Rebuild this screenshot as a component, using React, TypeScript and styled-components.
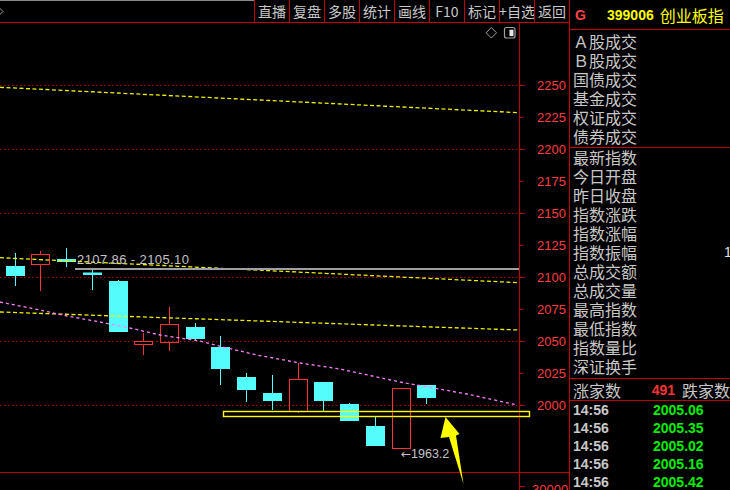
import React from "react";
import styled, { createGlobalStyle } from "styled-components";

const RED_LINE = "#c00000";
const AXIS_RED = "#ff3c3c";
const CYAN = "#54fcfc";
const CANDLE_RED = "#ff3232";
const GRID_DOT = "#b00000";

const GlobalStyle = createGlobalStyle`
  html, body { margin: 0; padding: 0; background: #000; }
  body {
    width: 730px;
    height: 490px;
    overflow: hidden;
    font-family: "Liberation Sans", "Noto Sans CJK SC", sans-serif;
  }
`;

const Screen = styled.div`
  display: flex;
  width: 730px;
  height: 490px;
  background: #000;
  overflow: hidden;
`;

const ChartColumn = styled.div`
  flex: none;
  width: 569px;
  display: flex;
  flex-direction: column;
`;

const Toolbar = styled.div`
  flex: none;
  display: flex;
  height: 22px;
  border-bottom: 1px solid ${RED_LINE};
`;

const ToolbarLead = styled.div`
  flex: 1;
  display: flex;
  align-items: center;
  box-sizing: border-box;
  border-top: 1px solid #8a8a8a;
`;

const ToolButton = styled.div`
  width: 34px;
  border-left: 1px solid ${RED_LINE};
  display: flex;
  align-items: center;
  justify-content: center;
  color: #c8c8c8;
  font: 14px/1 "Noto Sans CJK SC", sans-serif;
  white-space: nowrap;
`;

const ChartSvg = styled.svg`
  display: block;
  flex: none;
`;

const SidePanel = styled.div`
  flex: none;
  width: 160px;
  border-left: 1px solid ${RED_LINE};
  display: flex;
  flex-direction: column;
  color: #c8c8c8;
  font: 16px "Noto Sans CJK SC", sans-serif;
  overflow: hidden;
`;

const PanelHeader = styled.div`
  flex: none;
  height: 29px;
  border-bottom: 1px solid ${RED_LINE};
  display: flex;
  align-items: center;
  padding-left: 5px;
  white-space: nowrap;
`;

const MarketTag = styled.span`
  color: #ff4040;
  font: bold 14px "Liberation Sans", sans-serif;
  width: 32px;
`;

const IndexCode = styled.span`
  color: #ffff00;
  font: bold 14px "Liberation Sans", sans-serif;
  margin-right: 6px;
`;

const IndexName = styled.span`
  color: #ffff00;
  font: 16px "Noto Sans CJK SC", sans-serif;
`;

const Section = styled.div<{ $top: number; $bottom: number }>`
  flex: none;
  padding: ${(p) => p.$top}px 0 ${(p) => p.$bottom}px 3px;
  border-bottom: 1px solid ${RED_LINE};
`;

const FieldRow = styled.div`
  display: grid;
  grid-template-columns: 151px auto;
  height: 19px;
  line-height: 19px;
  white-space: nowrap;
`;

const FieldLabel = styled.span`
  display: block;
  height: 19px;
  line-height: 19px;
`;

const FieldValue = styled.span`
  display: block;
  color: #e0e0e0;
  font: 14px "Liberation Sans", sans-serif;
  line-height: 19px;
`;

const CountRow = styled.div`
  display: flex;
  align-items: center;
  height: 21px;
  padding-left: 3px;
  border-bottom: 1px solid ${RED_LINE};
  white-space: nowrap;
`;

const CountLabel = styled.span`
  width: 91px;
`;

const CountValue = styled.span`
  color: #ff3232;
  font: bold 14px "Liberation Sans", sans-serif;
  margin-right: 7px;
`;

const TickList = styled.div`
  display: flex;
  flex-direction: column;
  padding-left: 3px;
`;

const TickRow = styled.div`
  display: grid;
  grid-template-columns: 80px auto;
  height: 18px;
  align-items: center;
  font: bold 14px "Liberation Sans", sans-serif;
`;

const TickTime = styled.span`
  color: #c8c8c8;
`;

const TickPrice = styled.span`
  color: #00ee00;
`;

const toolButtons = ["直播", "复盘", "多股", "统计", "画线", "F10", "标记", "+自选", "返回"];

const volumeFields = ["Ａ股成交", "Ｂ股成交", "国债成交", "基金成交", "权证成交", "债券成交"];
const indexFields: [string, string][] = [
  ["最新指数", ""],
  ["今日开盘", ""],
  ["昨日收盘", ""],
  ["指数涨跌", ""],
  ["指数涨幅", ""],
  ["指数振幅", "1.36%"],
  ["总成交额", ""],
  ["总成交量", ""],
  ["最高指数", ""],
  ["最低指数", ""],
  ["指数量比", ""],
  ["深证换手", ""],
];
const ticks = ["2005.06", "2005.35", "2005.02", "2005.16", "2005.42"];

// price axis: y = 405.3 - (p - 2000) * 1.28
const priceY = (p: number) => 405.3 - (p - 2000) * 1.28;
const axisLevels = [2000, 2025, 2050, 2075, 2100, 2125, 2150, 2175, 2200, 2225, 2250];

// [left x, body top, body bottom, wick top, wick bottom, rising]
const candles: [number, number, number, number, number, boolean][] = [
  [6, 266, 276, 253, 286, false],
  [31, 254, 265, 251, 291, true],
  [57, 259, 262, 248, 267, false],
  [83, 272.5, 275, 269, 290, false],
  [109, 281, 332, 280, 332, false],
  [134, 341, 345, 333, 355, true],
  [160, 324, 343, 307, 351, true],
  [186, 327, 339, 323, 341, false],
  [211, 347, 369, 336, 385, false],
  [237, 377, 390, 373, 402, false],
  [263, 393, 401, 375, 410, false],
  [289, 379, 412, 363, 413, true],
  [314, 382, 401, 382, 411, false],
  [340, 404, 421, 403, 421, false],
  [366, 426, 446, 417, 446, false],
  [392, 388, 449, 388, 449, true],
  [417, 385, 398, 385, 404, false],
];

const pinkMa = "0,302 40,310 67,316 100,322 130,328 160,335 200,341 223,347 257,355 300,363 340,369 400,382 467,394 517,405";

function Candle({ c }: { c: [number, number, number, number, number, boolean] }) {
  const [x, top, bottom, wTop, wBottom, rising] = c;
  const cx = x + 9.5;
  if (rising) {
    return (
      <g stroke={CANDLE_RED} strokeWidth={1} fill="none">
        {wTop < top && <line x1={cx} y1={wTop} x2={cx} y2={top} />}
        {wBottom > bottom && <line x1={cx} y1={bottom} x2={cx} y2={wBottom} />}
        <rect x={x + 0.5} y={top + 0.5} width={18} height={Math.max(bottom - top - 1, 1)} />
      </g>
    );
  }
  return (
    <g>
      <line x1={cx} y1={wTop} x2={cx} y2={wBottom} stroke={CYAN} strokeWidth={1} />
      <rect x={x} y={top} width={19} height={Math.max(bottom - top, 2)} fill={CYAN} />
    </g>
  );
}

function PriceChart() {
  return (
    <ChartSvg width={569} height={467} viewBox="0 23 569 467">
      {/* dotted grid */}
      {[2000, 2050, 2100, 2150, 2200, 2250].map((p) => (
        <line
          key={p}
          x1={0}
          x2={517}
          y1={Math.round(priceY(p)) + 0.5}
          y2={Math.round(priceY(p)) + 0.5}
          stroke={GRID_DOT}
          strokeWidth={1}
          strokeDasharray="1.5 2.5"
        />
      ))}

      {/* axis */}
      <line x1={519.5} y1={23} x2={519.5} y2={490} stroke={RED_LINE} strokeWidth={1} />
      {axisLevels.map((p) => {
        const y = Math.round(priceY(p)) + 0.5;
        const major = p % 50 === 0;
        return (
          <g key={p}>
            <line x1={519} x2={major ? 525 : 523} y1={y} y2={y} stroke={RED_LINE} strokeWidth={1} />
            <text
              x={537}
              y={y}
              dominantBaseline="central"
              fill={AXIS_RED}
              fontFamily="Liberation Sans, sans-serif"
              fontSize={13}
            >
              {p}
            </text>
          </g>
        );
      })}
      <line x1={0} y1={472.5} x2={569} y2={472.5} stroke={RED_LINE} strokeWidth={1} />
      <line x1={519} x2={525} y1={486.5} y2={486.5} stroke={RED_LINE} strokeWidth={1} />
      <text x={532} y={489} dominantBaseline="central" fill={AXIS_RED} fontFamily="Liberation Sans, sans-serif" fontSize={13}>
        30000
      </text>

      {/* top-right chart controls */}
      <path d="M491.3 27.5 L496.5 32.8 L491.3 38 L486.1 32.8 Z" fill="none" stroke="#a0a0a0" strokeWidth={1} />
      <rect x={504.5} y={27.5} width={10.5} height={10.5} rx={2} fill="none" stroke="#a0a0a0" strokeWidth={1.2} />
      <rect x={509.5} y={29.7} width={4} height={6.4} fill="#e8e8e8" />

      {/* candles */}
      {candles.map((c, i) => (
        <Candle key={i} c={c} />
      ))}

      {/* moving averages */}
      <line x1={0} y1={87.3} x2={519} y2={112.7} stroke="#f0f000" strokeWidth={1.3} strokeDasharray="4 2.5" />
      <line x1={0} y1={257.7} x2={519} y2={282.7} stroke="#f0f000" strokeWidth={1.3} strokeDasharray="4 2.5" />
      <line x1={0} y1={312} x2={519} y2={330} stroke="#f0f000" strokeWidth={1.3} strokeDasharray="4 2.5" />
      <polyline points={pinkMa} fill="none" stroke="#ff80ff" strokeWidth={1.3} strokeDasharray="3 3" />

      {/* range line */}
      <line x1={75} y1={269} x2={519} y2={269} stroke="#a0a0a0" strokeWidth={2} />
      <text
        x={77}
        y={259.5}
        dominantBaseline="central"
        fill="#c4c4c4"
        fontFamily="Liberation Sans, sans-serif"
        fontSize={13}
        letterSpacing={0.4}
      >
        2107.86 - 2105.10
      </text>

      {/* low marker */}
      <text x={401} y={454} dominantBaseline="central" fill="#c4c4c4" fontFamily="Liberation Sans, sans-serif" fontSize={12.5}>
        <tspan fontFamily="DejaVu Sans, sans-serif" fontSize={12}>←</tspan>1963.2
      </text>

      {/* support box + arrow */}
      <rect x={223.5} y={411.5} width={306} height={5} fill="none" stroke="#ffff00" strokeWidth={1.4} />
      <polygon
        points="445.5,417 459.5,434 456,435.5 463.5,484 449,437 440.5,438"
        fill="#ffff00"
      />
    </ChartSvg>
  );
}

export default function App() {
  return (
    <>
      <GlobalStyle />
      <Screen>
        <ChartColumn>
          <Toolbar>
            <ToolbarLead>
              <svg width={4} height={9} viewBox="0 -4.5 4 9">
                <path d="M-1 -4 L3 0 L-1 4" fill="none" stroke="#a0a0a0" strokeWidth={1} />
              </svg>
            </ToolbarLead>
            {toolButtons.map((b) => (
              <ToolButton key={b}>{b}</ToolButton>
            ))}
          </Toolbar>
          <PriceChart />
        </ChartColumn>
        <SidePanel>
          <PanelHeader>
            <MarketTag>G</MarketTag>
            <IndexCode>399006</IndexCode>
            <IndexName>创业板指</IndexName>
          </PanelHeader>
          <Section $top={2} $bottom={1}>
            {volumeFields.map((f) => (
              <FieldRow key={f}>
                <FieldLabel>{f}</FieldLabel>
              </FieldRow>
            ))}
          </Section>
          <Section $top={0} $bottom={2}>
            {indexFields.map(([f, v]) => (
              <FieldRow key={f}>
                <FieldLabel>{f}</FieldLabel>
                <FieldValue>{v}</FieldValue>
              </FieldRow>
            ))}
          </Section>
          <CountRow>
            <CountLabel>涨家数</CountLabel>
            <CountValue>491</CountValue>
            <span>跌家数</span>
          </CountRow>
          <TickList>
            {ticks.map((t, i) => (
              <TickRow key={i}>
                <TickTime>14:56</TickTime>
                <TickPrice>{t}</TickPrice>
              </TickRow>
            ))}
          </TickList>
        </SidePanel>
      </Screen>
    </>
  );
}
